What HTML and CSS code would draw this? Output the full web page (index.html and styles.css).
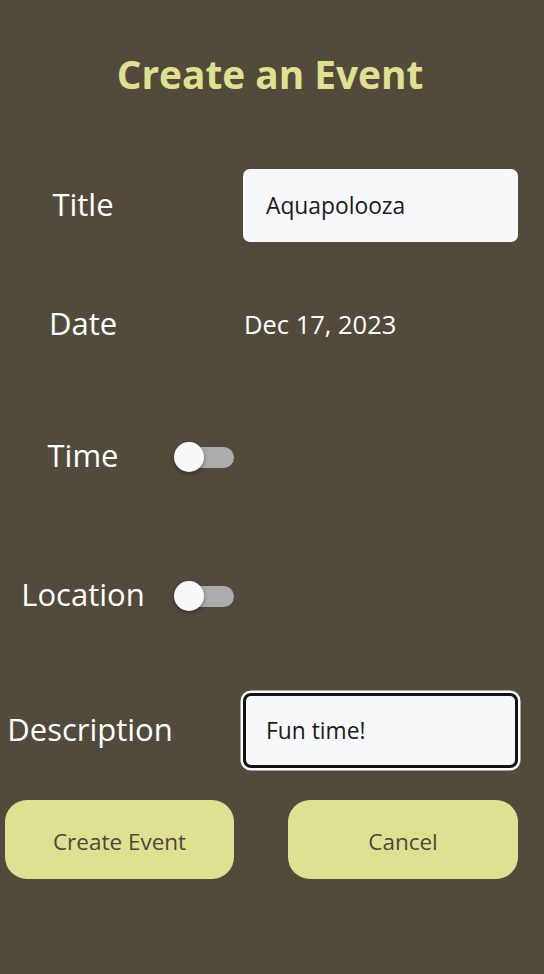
FILE: index.html
```html
<!DOCTYPE html>
<html>
<head>
<meta charset="utf-8">
<link rel="stylesheet" href="styles.css">
</head>
<body>
<main class="page">
  <h1 class="heading">Create an Event</h1>

  <div class="row row-title">
    <div class="label">Title</div>
    <div class="field field-input">Aquapolooza</div>
  </div>

  <div class="row row-date">
    <div class="label">Date</div>
    <div class="date-value">Dec 17, 2023</div>
  </div>

  <div class="row row-time">
    <div class="label">Time</div>
    <div class="toggle"><span class="track"></span><span class="thumb"></span></div>
  </div>

  <div class="row row-location">
    <div class="label">Location</div>
    <div class="toggle"><span class="track"></span><span class="thumb"></span></div>
  </div>

  <div class="row row-desc">
    <div class="label label-desc">Description</div>
    <div class="field field-focus">Fun time!</div>
  </div>

  <div class="buttons">
    <button class="btn btn-create">Create Event</button>
    <button class="btn btn-cancel">Cancel</button>
  </div>
</main>
</body>
</html>
```

FILE: styles.css
```css
html, body {
  margin: 0;
  padding: 0;
  background: #524b3c;
}
body {
  width: 544px;
  height: 974px;
  font-family: "Open Sans", "Noto Sans", sans-serif;
  color: #ffffff;
}
.page {
  display: flex;
  flex-direction: column;
}
.heading {
  margin: 0;
  height: 148px;
  line-height: 148px;
  text-align: center;
  font-size: 38.8px;
  font-weight: 700;
  color: #e0e190;
  padding-right: 4px;
}
.row {
  display: flex;
  align-items: center;
  height: 73px;
}
.row-title { margin-top: 21px; }
.row-date { margin-top: 46px; }
.row-time { margin-top: 59px; }
.row-location { margin-top: 66px; }
.row-desc { margin-top: 58px; height: 81px; }

.label {
  width: 166px;
  text-align: center;
  font-size: 31px;
  flex: none;
  margin-top: -3px;
}
.label-desc {
  width: 180px;
}
.field {
  box-sizing: border-box;
  width: 275px;
  height: 73px;
  background: #f7f8fa;
  border-radius: 7px;
  color: #1b1b1b;
  font-size: 22.8px;
  display: flex;
  align-items: center;
  padding-left: 23px;
}
.field-input {
  margin-left: 77px;
}
.field-focus {
  margin-left: 63px;
  height: 75px;
  border: 3px solid #141414;
  border-radius: 8px;
  padding-left: 20px;
  box-shadow: 0 0 0 2.5px #ffffff;
}
.date-value {
  margin-left: 78px;
  font-size: 25.5px;
  margin-top: -2px;
}
.toggle {
  position: relative;
  margin-left: 8px;
  width: 60px;
  height: 30px;
}
.track {
  position: absolute;
  left: 4px;
  right: 0;
  top: 5px;
  height: 21px;
  border-radius: 11px;
  background: #acacac;
}
.thumb {
  position: absolute;
  left: 0;
  top: 0;
  width: 30px;
  height: 30px;
  border-radius: 50%;
  background: #f7f8fa;
  box-shadow: 0 2px 4px rgba(0, 0, 0, 0.35);
}
.buttons {
  display: flex;
  margin-top: 29px;
  padding-left: 5px;
}
.btn {
  height: 79px;
  border: none;
  border-radius: 22px;
  background: #dfe192;
  color: #4d4839;
  font-family: "Open Sans", "Noto Sans", sans-serif;
  font-size: 22.5px;
  padding: 3px 0 0 0;
}
.btn-create { width: 229px; }
.btn-cancel { width: 230px; margin-left: 54px; }
```
